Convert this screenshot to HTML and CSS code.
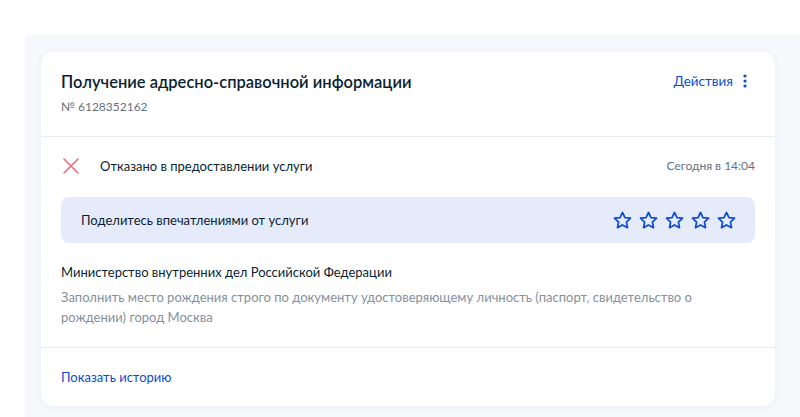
FILE: index.html
```html
<!DOCTYPE html>
<html lang="ru">
<head>
    <meta charset="UTF-8">
    <meta name="viewport" content="width=device-width, initial-scale=1.0">
    <title>Заявление</title>
    <link rel="stylesheet" href="styles.css">
</head>
<body>

    <div class="panel">
        <div class="order-card">

            <!-- Header -->
            <div class="order-head">
                <div>
                    <h2 class="order-title">Получение адресно-справочной информации</h2>
                    <div class="order-number">№ 6128352162</div>
                </div>
                <a class="actions">
                    Действия
                    <svg width="4" height="14" viewBox="0 0 4 14">
                        <circle cx="2" cy="2" r="1.6" fill="#0d4cd3"/>
                        <circle cx="2" cy="7" r="1.6" fill="#0d4cd3"/>
                        <circle cx="2" cy="12" r="1.6" fill="#0d4cd3"/>
                    </svg>
                </a>
            </div>

            <!-- Body -->
            <div class="order-body">
                <div class="status-row">
                    <svg class="status-icon" width="18" height="18" viewBox="0 0 18 18">
                        <path d="M2 2 L16 16 M16 2 L2 16" stroke="#ec6a7b" stroke-width="1.6" stroke-linecap="round"/>
                    </svg>
                    <span class="status-text">Отказано в предоставлении услуги</span>
                    <span class="status-date">Сегодня в 14:04</span>
                </div>

                <div class="feedback">
                    <span>Поделитесь впечатлениями от услуги</span>
                    <div class="stars" id="stars"></div>
                </div>

                <div class="org">Министерство внутренних дел Российской Федерации</div>
                <p class="comment">Заполнить место рождения строго по документу удостоверяющему личность (паспорт, свидетельство о рождении) город Москва</p>
            </div>

            <!-- Footer -->
            <div class="order-foot">
                <a class="history-link">Показать историю</a>
            </div>
        </div>
    </div>

    <script>
        const star = `
            <svg width="21" height="21" viewBox="0 0 24 24">
                <path d="M12 2.8 L14.8 8.6 L21.2 9.4 L16.5 13.8 L17.7 20.2 L12 17.1 L6.3 20.2 L7.5 13.8 L2.8 9.4 L9.2 8.6 Z"
                      fill="none" stroke="#0d4cd3" stroke-width="2" stroke-linejoin="round"/>
            </svg>`;
        document.getElementById("stars").innerHTML = star.repeat(5);
    </script>
</body>
</html>
```

FILE: styles.css
```css
/* Basic Styles */
body {
    margin: 0;
    padding: 0;
    background-color: #ffffff;
    font-family: Lato, "Liberation Sans", sans-serif;
    color: #0b1f33;
}

/* Background panel */
.panel {
    margin: 35px 0 0 25px;
    padding: 17px 25px 20px 16px;
    background-color: #f6f8fc;
}

/* Card */
.order-card {
    background-color: #ffffff;
    border-radius: 12px;
    box-shadow: 0 1px 6px rgba(30, 60, 120, 0.06);
}

.order-head {
    display: flex;
    justify-content: space-between;
    align-items: flex-start;
    padding: 18px 20px 21px;
    border-bottom: 1px solid #e8ecf2;
}

.order-title {
    margin: 0;
    font-size: 16.5px;
    line-height: 24px;
    font-weight: 600;
    color: #0b1f33;
}

.order-number {
    margin-top: 5px;
    font-size: 12px;
    line-height: 16px;
    color: #66727f;
}

.actions {
    display: flex;
    align-items: center;
    gap: 10px;
    margin-top: 0;
    margin-right: 8px;
    font-size: 13.5px;
    line-height: 22px;
    color: #0d4cd3;
    cursor: pointer;
}

.order-body {
    padding: 20px 20px 20px;
    border-bottom: 1px solid #e8ecf2;
}

.status-row {
    display: flex;
    align-items: center;
    font-size: 13px;
    line-height: 18px;
}

.status-icon {
    margin-left: 1px;
    margin-right: 20px;
}

.status-text {
    flex-grow: 1;
    color: #0b1f33;
}

.status-date {
    font-size: 12px;
    color: #66727f;
}

/* Feedback banner */
.feedback {
    display: flex;
    justify-content: space-between;
    align-items: center;
    height: 46px;
    margin-top: 22px;
    padding: 0 18px 0 20px;
    background-color: #e5ebfa;
    border-radius: 8px;
    font-size: 13px;
    color: #0b1f33;
}

.stars {
    display: flex;
    gap: 5px;
}

.stars svg {
    display: block;
}

.org {
    margin-top: 21px;
    font-size: 13px;
    line-height: 16px;
    color: #0b1f33;
}

.comment {
    margin: 7px 0 0;
    font-size: 13px;
    line-height: 20px;
    color: #86909c;
}

.order-foot {
    padding: 18px 20px 19px;
}

.history-link {
    font-size: 13px;
    line-height: 20px;
    color: #0d4cd3;
    cursor: pointer;
}
```
